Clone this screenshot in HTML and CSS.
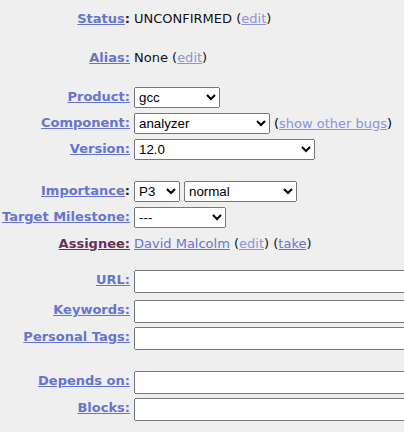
FILE: index.html
```html
<!DOCTYPE html>
<html>
<head>
<meta charset="utf-8">
<link rel="stylesheet" href="styles.css">
</head>
<body>
<div class="fields">
  <div class="row r-status">
    <div class="label"><a href="#" class="lbl">Status</a><span class="colon">:</span></div>
    <div class="text">UNCONFIRMED (<a href="#" class="soft">edit</a>)</div>
  </div>
  <div class="row r-alias">
    <div class="label"><a href="#" class="lbl">Alias:</a></div>
    <div class="text">None (<a href="#" class="soft">edit</a>)</div>
  </div>
  <div class="row r-product sel">
    <div class="label"><a href="#" class="lbl">Product:</a></div>
    <div class="value"><select class="w-product"><option>gcc</option></select></div>
  </div>
  <div class="row r-tight sel">
    <div class="label"><a href="#" class="lbl">Component:</a></div>
    <div class="value"><select class="w-component"><option>analyzer</option></select><span class="aside">(<a href="#" class="soft">show other bugs</a>)</span></div>
  </div>
  <div class="row r-tight sel">
    <div class="label"><a href="#" class="lbl">Version:</a></div>
    <div class="value"><select class="w-version"><option>12.0</option></select></div>
  </div>
  <div class="row r-importance sel">
    <div class="label"><a href="#" class="lbl">Importance</a><span class="colon">:</span></div>
    <div class="value pair"><select class="w-prio"><option>P3</option></select><select class="w-sev"><option>normal</option></select></div>
  </div>
  <div class="row r-tight sel">
    <div class="label"><a href="#" class="lbl">Target Milestone:</a></div>
    <div class="value"><select class="w-milestone"><option>---</option></select></div>
  </div>
  <div class="row r-assignee">
    <div class="label"><a href="#" class="lbl visited">Assignee:</a></div>
    <div class="text"><a href="#" class="plain">David Malcolm</a> (<a href="#" class="soft">edit</a>) (<a href="#" class="plain">take</a>)</div>
  </div>
  <div class="row r-url inp">
    <div class="label"><a href="#" class="lbl">URL:</a></div>
    <div class="value"><input type="text" class="wide"></div>
  </div>
  <div class="row r-keywords inp">
    <div class="label"><a href="#" class="lbl">Keywords:</a></div>
    <div class="value"><input type="text" class="wide"></div>
  </div>
  <div class="row r-tags inp">
    <div class="label"><a href="#" class="lbl">Personal Tags:</a></div>
    <div class="value"><input type="text" class="wide"></div>
  </div>
  <div class="row r-depends inp">
    <div class="label"><a href="#" class="lbl">Depends on:</a></div>
    <div class="value"><input type="text" class="wide"></div>
  </div>
  <div class="row r-blocks inp">
    <div class="label"><a href="#" class="lbl">Blocks:</a></div>
    <div class="value"><input type="text" class="wide"></div>
  </div>
</div>
</body>
</html>
```
FILE: styles.css
```css
html, body {
  margin: 0;
  padding: 0;
  overflow: hidden;
}
body {
  background: #efefef;
  font-family: "DejaVu Sans", Verdana, sans-serif;
  font-size: 13px;
  color: #000;
}
.fields {
  display: flex;
  flex-direction: column;
}
.row {
  display: grid;
  grid-template-columns: 130px 1fr;
  column-gap: 4px;
  align-items: center;
}
.label {
  text-align: right;
  font-weight: bold;
  white-space: nowrap;
}
.sel .label {
  padding-bottom: 2px;
}
.inp .label {
  padding-bottom: 4px;
}
.value {
  white-space: nowrap;
  display: flex;
  align-items: center;
  min-width: 0;
}
.text {
  white-space: nowrap;
  color: #111;
}
a {
  color: #6675d1;
  text-decoration: underline;
}
a.visited {
  color: #6a2f5e;
}
a.soft {
  color: #8b93d9;
}
.colon {
  color: #222;
}
.aside {
  margin-left: 4px;
}
select {
  height: 21px;
  margin: 0;
}
.pair {
  gap: 4px;
}
.w-product { width: 86px; }
.w-component { width: 136px; }
.w-version { width: 181px; }
.w-prio { width: 46px; }
.w-sev { width: 113px; }
.w-milestone { width: 92px; }
input.wide {
  width: 330px;
  flex: none;
  height: 23px;
  box-sizing: border-box;
  margin: 0;
}
.r-status { height: 20px; margin-top: 8px; }
.r-alias { height: 20px; margin-top: 19px; }
.r-product { height: 21px; margin-top: 20px; }
.r-tight { height: 21px; margin-top: 5px; }
.r-importance { height: 21px; margin-top: 21px; }
.r-assignee { height: 20px; margin-top: 5px; }
.r-url { height: 23px; margin-top: 17px; }
.r-keywords { height: 23px; margin-top: 7px; }
.r-tags { height: 23px; margin-top: 4px; }
.r-depends { height: 23px; margin-top: 21px; }
.r-blocks { height: 23px; margin-top: 4px; }
```
